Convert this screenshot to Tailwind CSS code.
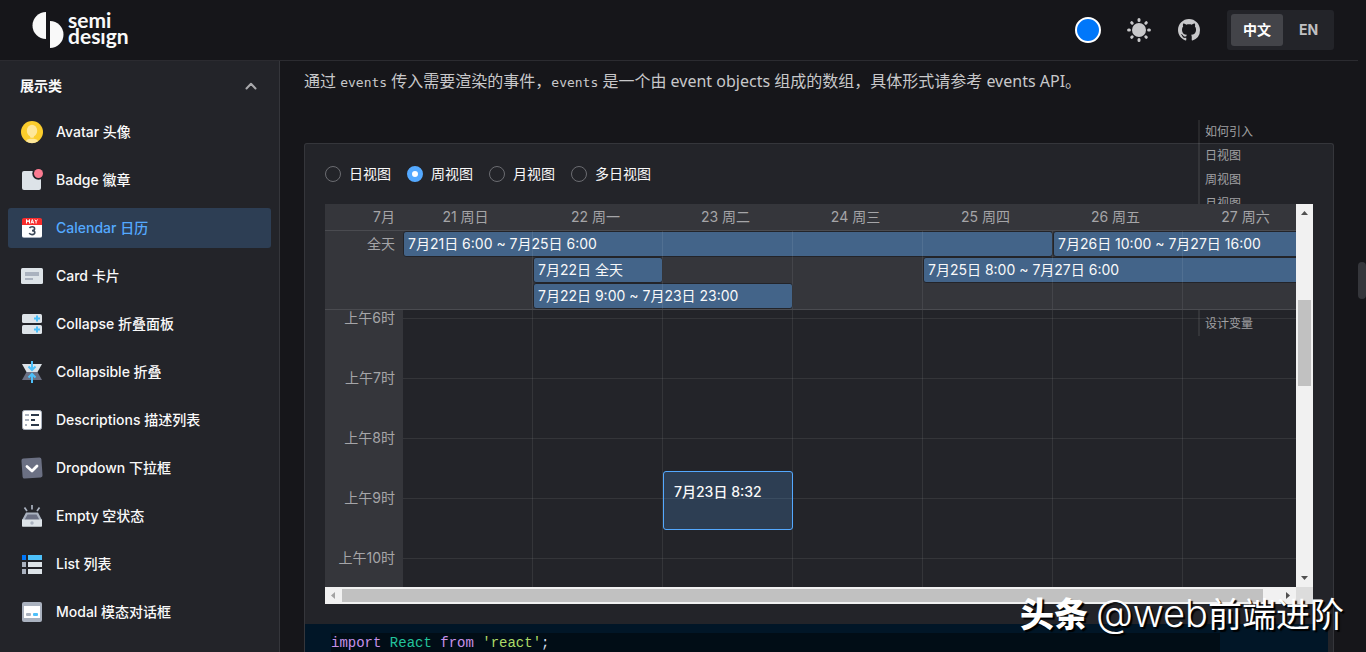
<!DOCTYPE html>
<html lang="zh-CN">
<head>
<meta charset="utf-8">
<meta name="viewport" content="width=device-width, initial-scale=1">
<title>Calendar 日历 - Semi Design</title>
<script src="https://cdn.jsdelivr.net/npm/@tailwindcss/browser@4"></script>
</head>
<body class="relative flex h-screen flex-col overflow-hidden bg-[#16161a] pr-2 font-['Inter','Noto_Sans_CJK_SC',sans-serif] text-sm text-[#f9f9f9]">

<header class="flex h-[61px] shrink-0 items-center justify-between border-b border-[#2b2b30] pr-6 pl-8">
  <a href="#" class="flex items-center gap-1" aria-label="Semi Design">
    <svg class="h-9 w-8" viewBox="0 0 32 36" fill="#f9f9f9" aria-hidden="true"><path d="M14 0v27A13.5 13.5 0 0 1 14 0Z"/><path d="M18 9v27A13.5 13.5 0 0 0 18 9Z"/></svg>
    <span class="flex flex-col pb-1 font-['Lato',sans-serif] text-[21px] leading-4 font-bold"><span>semi</span><span>desıgn</span></span>
  </a>
  <div class="flex items-center">
    <button aria-label="主题色" class="mr-[26px] size-[26px] rounded-full border-2 border-white bg-[#0077fa]"></button>
    <button aria-label="切换主题" class="mr-6 size-6">
      <svg viewBox="0 0 24 24" fill="#c8c8ca" stroke="#c8c8ca" stroke-width="3" stroke-linecap="round"><circle cx="12" cy="12" r="7" stroke="none"/><path d="M12 1.6v.8M12 21.6v.8M1.6 12h.8M21.6 12h.8M4.7 4.7l.5.5M18.8 18.8l.5.5M4.7 19.3l.5-.5M18.8 5.2l.5-.5"/></svg>
    </button>
    <a href="#" aria-label="GitHub" class="mr-[27px] ml-[3px] size-[22px]">
      <svg viewBox="0 0 16 16" fill="#c8c8ca"><path d="M8 0C3.58 0 0 3.58 0 8c0 3.54 2.29 6.53 5.47 7.59.4.07.55-.17.55-.38 0-.19-.01-.82-.01-1.49-2.01.37-2.53-.49-2.69-.94-.09-.23-.48-.94-.82-1.13-.28-.15-.68-.52-.01-.53.63-.01 1.08.58 1.23.82.72 1.21 1.87.87 2.33.66.07-.52.28-.87.51-1.07-1.78-.2-3.64-.89-3.64-3.95 0-.87.31-1.59.82-2.15-.08-.2-.36-1.02.08-2.12 0 0 .67-.21 2.2.82.64-.18 1.32-.27 2-.27s1.36.09 2 .27c1.53-1.04 2.2-.82 2.2-.82.44 1.1.16 1.92.08 2.12.51.56.82 1.27.82 2.15 0 3.07-1.87 3.75-3.65 3.95.29.25.54.73.54 1.48 0 1.07-.01 1.93-.01 2.2 0 .21.15.46.55.38A8.01 8.01 0 0 0 16 8c0-4.42-3.58-8-8-8Z"/></svg>
    </a>
    <div class="flex h-10 rounded-[3px] bg-[#232429] p-1 font-bold">
      <button class="w-[52px] rounded-[3px] bg-[#434449] text-white">中文</button>
      <button class="w-[47px] pl-1 text-[#c0c0c2]">EN</button>
    </div>
  </div>
</header>

<div class="flex min-h-0 flex-1">
  <nav class="w-[280px] shrink-0 overflow-hidden border-r border-[#35363b] bg-[#232429] px-2" aria-label="组件">
    <button class="mb-px flex h-[50px] w-full items-center justify-between px-3 font-bold">展示类
      <svg class="size-4" viewBox="0 0 16 16" fill="none" stroke="#a9a9ac" stroke-width="2" stroke-linecap="round" stroke-linejoin="round"><path d="M3.5 10.5 8 5.8l4.5 4.7"/></svg>
    </button>
    <ul class="flex flex-col gap-2 font-medium">
      <li><a href="#" class="flex h-10 items-center gap-3 rounded-[3px] px-3">
        <svg class="size-6" viewBox="0 0 24 24"><circle cx="12" cy="12" r="11" fill="#fbcd2c"/><ellipse cx="12" cy="10.800" rx="5.200" ry="6" fill="#fde79a"/><path d="M9.500 15h5l-1 2.800h-3zM6 21.200C7 19 9 18.800 12 18.800s5 .2 6 2.400A11 11 0 0 1 6 21.200Z" fill="#fde79a"/></svg>Avatar 头像</a></li>
      <li><a href="#" class="flex h-10 items-center gap-3 rounded-[3px] px-3">
        <svg class="size-6" viewBox="0 0 24 24"><rect x="2" y="3" width="19" height="19" rx="2" fill="#dde3e8"/><circle cx="18.500" cy="5.500" r="6.200" fill="#232429"/><circle cx="18.500" cy="5.500" r="4.500" fill="#fb7b91"/></svg>Badge 徽章</a></li>
      <li><a href="#" aria-current="page" class="flex h-10 items-center gap-3 rounded-[3px] bg-[#2d3e54] px-3 text-[#54a9ff]">
        <svg class="size-6" viewBox="0 0 24 24"><rect x="2" y="3" width="20" height="19" rx="2" fill="#aab2bf"/><path d="M2 8h20v11.500a1.500 1.500 0 0 1-1.500 1.500h-17A1.500 1.500 0 0 1 2 19.500Z" fill="#fff"/><path d="M2 9V4a2 2 0 0 1 2-2h16a2 2 0 0 1 2 2v5Z" fill="#f82c2c"/><g fill="none" stroke="#fff"><path d="M6.500 7.500v-4l1.500 2.500 1.500-2.500v4M11 7.500l1.300-4 1.400 4M11.500 6.300h1.800M14.800 3.500l1.300 2 1.400-2M16.100 5.500v2"/></g><path d="M9.500 12c.6-1 1.500-1.200 2.600-1.200 1.500 0 2.500.7 2.500 1.900s-1 1.900-2.600 1.900c1.700 0 2.800.7 2.800 2s-1.100 2-2.800 2c-1.200 0-2.200-.4-2.800-1.400" fill="none" stroke="#3a4657" stroke-width="1.600"/></svg>Calendar 日历</a></li>
      <li><a href="#" class="flex h-10 items-center gap-3 rounded-[3px] px-3">
        <svg class="size-6" viewBox="0 0 24 24"><rect x="1" y="4" width="22" height="16" rx="1.500" fill="#dde3e8"/><path d="M5 8h14v4H5zM5 14h8v2H5z" fill="#aab2bf"/></svg>Card 卡片</a></li>
      <li><a href="#" class="flex h-10 items-center gap-3 rounded-[3px] px-3">
        <svg class="size-6" viewBox="0 0 24 24"><rect x="2" y="2" width="20" height="9" rx="1.500" fill="#dde3e8"/><rect x="2" y="13" width="20" height="9" rx="1.500" fill="#dde3e8"/><path d="M17 3.500v6M14 6.500h6M17 14.500v6M14 17.500h6" stroke="#4dc0fa" stroke-width="2"/></svg>Collapse 折叠面板</a></li>
      <li><a href="#" class="flex h-10 items-center gap-3 rounded-[3px] px-3">
        <svg class="size-6" viewBox="0 0 24 24"><path d="M2 4h20l-4.500 8h-11Z" fill="#dde3e8"/><path d="M6.500 12h11l4.500 8H2Z" fill="#6b7083"/><path d="M12 1v9M8.500 6.500 12 10l3.500-3.500M12 23v-9M8.500 17.500 12 14l3.500 3.500" fill="none" stroke="#4dc0fa" stroke-width="2"/></svg>Collapsible 折叠</a></li>
      <li><a href="#" class="flex h-10 items-center gap-3 rounded-[3px] px-3">
        <svg class="size-6" viewBox="0 0 24 24"><rect x="2.500" y="2.500" width="19" height="19" rx="2" fill="#fff" stroke="#aab2bf"/><path d="M5 7h4M5 12h4M5 17h2" stroke="#aab2bf" stroke-width="2"/><path d="M11 7h8M11 12h4M11 17h8" stroke="#2c3a4b" stroke-width="2"/></svg>Descriptions 描述列表</a></li>
      <li><a href="#" class="flex h-10 items-center gap-3 rounded-[3px] px-3">
        <svg class="size-6" viewBox="0 0 24 24"><rect x="2" y="2" width="20" height="20" rx="2" fill="#6b7083" transform="rotate(-4 12 12)"/><path d="M7 10.500 12 15l5-5" fill="none" stroke="#fff" stroke-width="2.800" stroke-linecap="round" stroke-linejoin="round"/></svg>Dropdown 下拉框</a></li>
      <li><a href="#" class="flex h-10 items-center gap-3 rounded-[3px] px-3">
        <svg class="size-6" viewBox="0 0 24 24"><path d="M6 8.500h12l4 7.500H2Z" fill="#aab2bf"/><path d="M7.500 10.500h9L19.500 16h-15Z" fill="#6b7083"/><path d="M2 15.500h20V22a.7.7 0 0 1-.7.7H2.700A.7.700 0 0 1 2 22Z" fill="#dde3e8"/><circle cx="12" cy="19" r="1.700" fill="#aab2bf"/><path d="M12 1v4.500M4.500 3.500 7 7M19.500 3.500 17 7" stroke="#aab2bf" stroke-width="1.700"/></svg>Empty 空状态</a></li>
      <li><a href="#" class="flex h-10 items-center gap-3 rounded-[3px] px-3">
        <svg class="size-6" viewBox="0 0 24 24"><path d="M2 3h4v5H2z" fill="#0077fa"/><path d="M8 3h14v5H8z" fill="#4dc0fa"/><path d="M2 10h4v5H2zM2 17h4v5H2z" fill="#aab2bf"/><path d="M8 10h14v5H8zM8 17h14v5H8z" fill="#dde3e8"/></svg>List 列表</a></li>
      <li><a href="#" class="flex h-10 items-center gap-3 rounded-[3px] px-3">
        <svg class="size-6" viewBox="0 0 24 24"><rect x="2" y="2" width="20" height="20" rx="2" fill="#aab2bf"/><path d="M4 6h16v12H4z" fill="#fff"/><rect x="6" y="13" width="5" height="3" rx="1" fill="#aab2bf"/><rect x="13" y="13" width="5" height="3" rx="1" fill="#4dc0fa"/></svg>Modal 模态对话框</a></li>
    </ul>
  </nav>

  <main class="flex min-w-0 flex-1 flex-col overflow-hidden px-6 pt-2">
    <p class="font-['Noto_Sans','Noto_Sans_CJK_SC',sans-serif] text-base leading-6 text-[#c8c8ca]">通过 <code class="font-['DejaVu_Sans_Mono',monospace] text-[13px]">events</code> 传入需要渲染的事件，<code class="font-['DejaVu_Sans_Mono',monospace] text-[13px]">events</code> 是一个由 event objects 组成的数组，具体形式请参考 events API。</p>

    <section class="mt-12 flex min-h-0 flex-1 flex-col overflow-hidden rounded-t-[3px] border border-b-0 border-[#35363b] bg-[#232429]">
      <div class="shrink-0 p-5">
        <div class="flex h-5 gap-4 leading-5" role="radiogroup" aria-label="视图">
          <label class="flex items-center gap-2"><input type="radio" name="view" class="size-4 appearance-none rounded-full border border-[#6b6c71] checked:border-[5px] checked:border-[#54a9ff] checked:bg-white">日视图</label>
          <label class="flex items-center gap-2"><input type="radio" name="view" checked class="size-4 appearance-none rounded-full border border-[#6b6c71] checked:border-[5px] checked:border-[#54a9ff] checked:bg-white">周视图</label>
          <label class="flex items-center gap-2"><input type="radio" name="view" class="size-4 appearance-none rounded-full border border-[#6b6c71] checked:border-[5px] checked:border-[#54a9ff] checked:bg-white">月视图</label>
          <label class="flex items-center gap-2"><input type="radio" name="view" class="size-4 appearance-none rounded-full border border-[#6b6c71] checked:border-[5px] checked:border-[#54a9ff] checked:bg-white">多日视图</label>
        </div>

        <div class="mt-5 grid grid-cols-[minmax(0,1fr)_17px] grid-rows-[383px_17px]">
          <!-- week view; the grid runs under the vertical scrollbar -->
          <div class="overflow-hidden">
            <div class="w-[calc(100%+17px)]">
              <div class="relative z-20 bg-[#35363b]">
                <div class="grid h-[27px] grid-cols-[78px_repeat(7,1fr)] items-center border-b border-[#4a4b50] text-center text-[#a5a5a8]">
                  <span class="pr-2 text-right">7月</span>
                  <span class="pr-[5px]">21 周日</span><span class="pr-[5px]">22 周一</span><span class="pr-[5px]">23 周二</span><span class="pr-[5px]">24 周三</span><span class="pr-[5px]">25 周四</span><span class="pr-[5px]">26 周五</span><span class="pr-[5px]">27 周六</span>
                </div>
                <div class="relative grid grid-cols-[78px_repeat(7,1fr)] grid-rows-[26px_26px_26px] border-b border-[#4a4b50] leading-6">
                  <span class="col-start-1 row-start-1 pr-2 text-right leading-[26px] text-[#a5a5a8]">全天</span>
                  <div class="col-span-5 col-start-2 row-start-1 rounded-[3px] border border-[#232429] bg-[#436489] px-1">7月21日 6:00 ~ 7月25日 6:00</div>
                  <div class="col-span-2 col-start-7 row-start-1 rounded-[3px] border border-[#232429] bg-[#436489] px-1">7月26日 10:00 ~ 7月27日 16:00</div>
                  <div class="col-start-3 row-start-2 rounded-[3px] border border-[#232429] bg-[#436489] px-1">7月22日 全天</div>
                  <div class="col-span-3 col-start-6 row-start-2 rounded-[3px] border border-[#232429] bg-[#436489] px-1">7月25日 8:00 ~ 7月27日 6:00</div>
                  <div class="col-span-2 col-start-3 row-start-3 rounded-[3px] border border-[#232429] bg-[#436489] px-1">7月22日 9:00 ~ 7月23日 23:00</div>
                  <div class="pointer-events-none absolute inset-y-0 right-0 left-[78px] grid grid-cols-7" aria-hidden="true"><i class="border-r border-white/8"></i><i class="border-r border-white/8"></i><i class="border-r border-white/8"></i><i class="border-r border-white/8"></i><i class="border-r border-white/8"></i><i class="border-r border-white/8"></i></div>
                </div>
              </div>

              <div class="grid h-[277px] grid-cols-[78px_1fr] overflow-hidden">
                <div class="bg-[#35363b] pr-2 text-right leading-4 text-[#a5a5a8]">
                  <div class="h-[60px]">上午6时</div>
                  <div class="h-[60px]">上午7时</div>
                  <div class="h-[60px]">上午8时</div>
                  <div class="h-[60px]">上午9时</div>
                  <div>上午10时</div>
                </div>
                <div class="relative">
                  <div class="h-[9px] border-b border-white/8"></div>
                  <div class="h-[60px] border-b border-white/8"></div>
                  <div class="h-[60px] border-b border-white/8"></div>
                  <div class="h-[60px] border-b border-white/8"></div>
                  <div class="h-[60px] border-b border-white/8"></div>
                  <div class="absolute inset-0 grid grid-cols-7">
                    <i class="border-r border-white/8"></i><i class="border-r border-white/8"></i><i class="border-r border-white/8"></i><i class="border-r border-white/8"></i><i class="border-r border-white/8"></i><i class="border-r border-white/8"></i>
                  </div>
                  <div class="absolute inset-0 grid grid-cols-7">
                    <div class="col-start-3 mt-[161px] h-[59px] rounded-[3px] border border-[#54a9ff] bg-[#54a9ff]/20 p-[10px] leading-5 font-medium">7月23日 8:32</div>
                  </div>
                </div>
              </div>
            </div>
          </div>

          <div class="relative z-20 flex flex-col items-center bg-[#f1f1f1]" aria-hidden="true">
            <svg class="size-[17px]" viewBox="0 0 17 17" fill="#505050"><path d="M5 11h7L8.500 7Z"/></svg>
            <div class="mt-[79px] h-[86px] w-[13px] bg-[#c1c1c1]"></div>
            <svg class="mt-auto size-[17px]" viewBox="0 0 17 17" fill="#505050"><path d="M5 6h7L8.500 10Z"/></svg>
          </div>
          <div class="flex items-center bg-[#f1f1f1]" aria-hidden="true">
            <svg class="size-[17px]" viewBox="0 0 17 17" fill="#a3a3a3"><path d="M10 5v7L6 8.500Z"/></svg>
            <div class="mr-4 h-[13px] flex-1 bg-[#c1c1c1]"></div>
            <svg class="size-[17px]" viewBox="0 0 17 17" fill="#505050"><path d="M7 5v7l4-3.500Z"/></svg>
          </div>
          <div class="bg-[#dcdcdc]"></div>
        </div>
      </div>
      <pre class="mr-[5px] min-h-0 flex-1 overflow-hidden bg-[#011627] pt-[9px] pr-[108px] pl-[26px] font-['Liberation_Mono',monospace] text-sm leading-5 text-[#d6deeb]"><code class="block bg-[#010d16]"><span class="text-[#c792ea]">import</span> <span class="text-[#22c39c]">React</span> <span class="text-[#c792ea]">from</span> <span class="text-[#addb67]">'react'</span>;</code></pre>
    </section>
  </main>
</div>

<!-- page outline, floating above the content -->
<ul class="absolute top-[120px] right-12 z-10 w-[120px] border-l-2 border-white/8 pl-[5px] text-xs leading-6 text-[#a0a0a3]">
  <li><a href="#">如何引入</a></li>
  <li><a href="#">日视图</a></li>
  <li><a href="#">周视图</a></li>
  <li><a href="#">月视图</a></li>
  <li class="h-24"></li>
  <li><a href="#">设计变量</a></li>
</ul>

<!-- page scrollbar thumb -->
<div class="absolute top-[262px] right-0 h-[37px] w-2 rounded-full bg-[#35363b]"></div>

<!-- watermark -->
<div class="absolute right-[22px] bottom-[14px] z-30 flex items-center gap-2 text-[34px] leading-[50px] whitespace-nowrap text-white [text-shadow:2px_2px_1px_#000]">
  <span class="font-['Noto_Sans_CJK_SC',sans-serif] font-black">头条</span>
  <span class="flex items-center font-['Noto_Sans_CJK_SC',sans-serif]"><span class="font-['Inter',sans-serif] text-[38px] font-light">@web</span>前端进阶</span>
</div>
</body>
</html>
